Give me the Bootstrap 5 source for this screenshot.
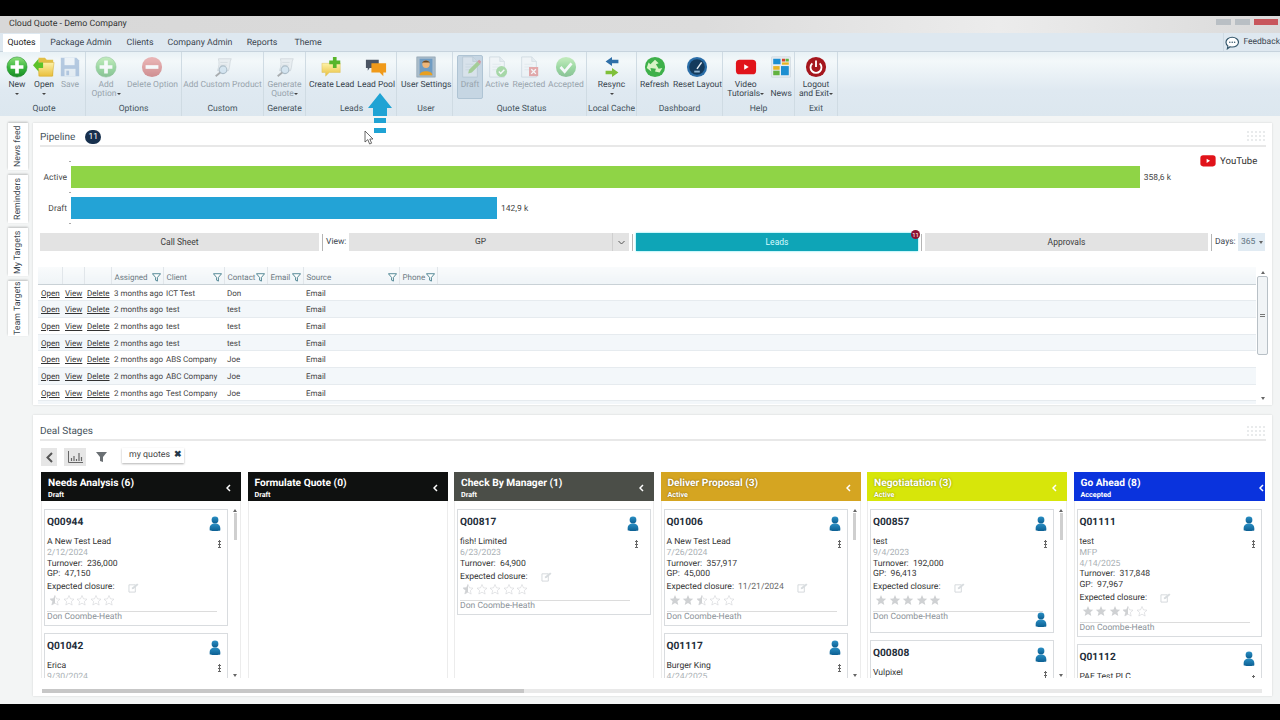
<!DOCTYPE html>
<html lang="en">
<head>
<meta charset="UTF-8" />
<meta name="viewport" content="width=device-width, initial-scale=1.0" />
<title>Cloud Quote - Demo Company</title>
<link href="https://cdn.jsdelivr.net/npm/bootstrap@5.3.3/dist/css/bootstrap.min.css" rel="stylesheet" />
<style>
  html, body { height: 720px; overflow: hidden; }
  body { width: 1280px; background: #000; font-family: Roboto, "Noto Sans", sans-serif; font-size: 8.5px; color: #3b4650; position: relative; line-height: 1.3; text-rendering: geometricPrecision; }
  .svg-defs { position: absolute; width: 0; height: 0; }
  .app { margin-top: 16px; height: 688px; background: #f3f5f5; overflow: hidden; }

  /* window chrome */
  .titlebar { height: 17px; background: linear-gradient(90deg, #d8d8d8 0, #dcdcdc 55%, #ececec 78%, #dadada 100%); padding: 1px 2px 0 9px; font-size: 8.8px; color: #333; }
  .win-btns { align-self: flex-start; margin-top: 2px; }
  .win-btn { height: 6px; width: 15px; background: #b9bfc4; }
  .win-btn.close { width: 24px; background: #c8565c; }
  .tabbar { height: 19px; background: #dee8f0; border-bottom: 1px solid #c6d3dd; padding-left: 3px; }
  .tabbar .nav-link { height: 18px; padding: 5px 0 0; color: #3b4650; font-size: 8.8px; border: 0; border-radius: 0; text-align: center; }
  .tabbar .nav-link.active { background: #fff; color: #222; margin-top: 1px; padding-top: 4px; }
  .t-quotes { width: 37px; } .t-pack { width: 82px; } .t-clients { width: 36px; } .t-company { width: 84px; } .t-reports { width: 40px; } .t-theme { width: 52px; }
  .feedback { width: 57px; height: 18px; font-size: 8.5px; border-left: 1px solid #cfdbe4; padding: 2px 0 0 1px; }
  .ribbon { height: 64px; background: linear-gradient(180deg, #e8f1f5 0, #f3f8fa 14%, #dfe9f1 60%, #dce7ef 100%); }
  .rgroup { border-right: 1px solid #cfdbe3; height: 64px; }
  .rgroup .items { height: 51px; padding-top: 3px; }
  .rgroup .glabel { height: 13px; padding-top: 1px; text-align: center; font-size: 8.6px; color: #44525c; }
  .ritem { text-align: center; height: 44px; font-size: 8.5px; line-height: 8.6px; color: #36434d; white-space: nowrap; border: 1px solid transparent; }
  .ritem svg { display: block; width: 22px; height: 22px; margin: 0 auto 3px; }
  .ritem.off { color: #98a4ad; }
  .ritem.off svg { opacity: .45; }
  .ritem.pressed { background: #c6d6e3; border-color: #afc4d4; border-radius: 2px; }
  .caret-s { display: inline-block; border: 2px solid transparent; border-top-color: #444; border-bottom: 0; vertical-align: 1px; }
  .g-quote { width: 86px; padding-left: 3px; } .g-options { width: 96px; } .g-custom { width: 82px; } .g-generate { width: 42px; }
  .g-leads { width: 91px; padding-left: 1px; } .g-user { width: 56px; padding-left: 3px; } .g-status { width: 134px; padding-left: 4px; }
  .g-cache { width: 50px; } .g-dash { width: 86px; } .g-help { width: 72px; } .g-exit { width: 43px; }
  .w26 { width: 26px; } .w28 { width: 28px; } .w36 { width: 36px; } .w38 { width: 38px; } .w40 { width: 40px; } .w46 { width: 46px; } .w50 { width: 50px; } .w52 { width: 52px; } .wfull { width: 100%; }

  /* side tabs */
  .main { height: 588px; padding-top: 7px; }
  .sidetabs { width: 33px; padding-left: 8px; }
  .sidetab { width: 20px; background: #fff; box-shadow: 0 1px 2px rgba(0,0,0,.22); writing-mode: vertical-rl; transform: rotate(180deg); text-align: center; font-size: 8.8px; line-height: 20px; margin-bottom: 5px; }
  .st1 { height: 47px; } .st2 { height: 48px; } .st3 { height: 48px; } .st4 { height: 55px; }

  /* panels */
  .panel { width: 1239px; background: #fff; box-shadow: 0 0 2px rgba(0,0,0,.14); padding-left: 7px; position: relative; }
  .panel-1 { height: 282px; }
  .panel-2 { height: 281px; margin-top: 10px; }
  .phead { width: 1226px; border-bottom: 2px solid #e8e8e8; font-size: 10px; color: #46535c; }
  .panel-1 .phead { height: 24px; padding-top: 7px; }
  .panel-2 .phead { height: 26px; padding-top: 10px; }
  .count { width: 16px; height: 14px; border-radius: 7px; background: #17304e; color: #fff; font-size: 8.5px; margin-left: 10px; line-height: 14px; text-align: center; }
  .grip { width: 20px; height: 11px; background-image: radial-gradient(circle, #e9ebec 1.3px, transparent 1.5px); background-size: 4px 4px; }

  /* pipeline chart */
  .chart { height: 86px; padding-top: 14px; }
  .chart-left { width: 1131px; }
  .tick { width: 2px; height: 1px; margin: 4px 0 4px 29px; background: #aaa; }
  .tick.first { margin-top: 0; }
  .bar-row { height: 22px; }
  .bar-label { width: 27px; text-align: right; font-size: 8.5px; color: #4a4a4a; margin-right: 4px; padding-top: 3px; }
  .bar-track { width: 1100px; }
  .bar { height: 22px; }
  .bar-green { background: #8fd446; }
  .bar-blue { background: #23a3d6; }
  .bar-val { font-size: 8.5px; margin-left: 4px; white-space: nowrap; color: #444; padding-top: 3px; }
  .yt { margin-left: 27px; margin-top: -6px; font-size: 9.6px; color: #333; height: 14px; gap: 2px; }

  /* switch row */
  .switches { height: 18px; gap: 3px; width: 1225px; font-size: 8.5px; }
  .switches .btn { height: 18px; padding: 0; border: 0; border-radius: 0; background: #e3e3e3; color: #3c3c3c; font-size: 8.5px; line-height: 19px; }
  .sw-call { width: 279px; } .sw-gp { width: 280px; } .sw-leads { width: 282px; } .sw-appr { width: 283px; }
  .switches .btn.sw-leads { background: #0ea5b7; color: #d9fbff; box-shadow: 0 0 2px #5fe7f2; }
  .vsep { width: 1px; height: 17px; background: #b5b5b5; }
  .sw-label { width: 20px; white-space: nowrap; padding-top: 2px; }
  .gp-chev { width: 17px; height: 18px; border-left: 1px solid #cfcfcf; }
  .lead-badge { top: -3px; right: -2px; width: 9px; height: 9px; border-radius: 5px; background: #8d1230; color: #fff; font-size: 6px; line-height: 9px; }
  .days { width: 27px; height: 18px; background: #e1ebf3; color: #5d7180; padding-left: 3px; line-height: 18px; }

  /* leads grid */
  .grid-wrap { margin: 16px 0 0 -2px; width: 1231px; }
  .grid-table { width: 1218px; table-layout: fixed; margin: 0; font-size: 8px; color: #444; }
  .grid-table th, .grid-table td { padding: 2px 0 0 3px; height: 16.7px; line-height: 13px; white-space: nowrap; border-bottom: 1px solid #e6ebef; font-weight: 400; box-shadow: none; background: transparent; color: #444; }
  .grid-table thead th { height: 17px; padding: 1px 0 0 3px; background: linear-gradient(180deg, #f9fbfc, #eff4f7); border-bottom: 1px solid #c9d1d6; border-right: 1px solid #e1e6ea; color: #6d7a83; }
  .grid-table thead th:last-child { border-right: 0; }
  .grid-table tbody tr:nth-child(even) td { background: #f3f7fa; }
  .grid-table a { color: #333; }
  .c-open { width: 24px; } .c-view { width: 22px; } .c-del { width: 27px; } .c-ass { width: 52px; } .c-cli { width: 61px; } .c-con { width: 43px; } .c-eml { width: 36px; } .c-src { width: 96px; } .c-pho { width: 38px; }
  .th-in { padding-right: 2px; }
  .funnel { width: 9px; height: 9px; flex: none; }
  .grid-tail { height: 3px; width: 1218px; background: #f3f7fa; }
  .vscroll { width: 11px; margin-left: 1px; height: 137px; }
  .vthumb { height: 79px; margin-top: 2px; border: 1px solid #b8c0c6; border-radius: 2px; background: #f1f4f6; }
  .vgrip { width: 5px; height: 3px; border-top: 1px solid #777; border-bottom: 1px solid #777; }
  .tri-u, .tri-d { width: 0; height: 0; border: 2px solid transparent; margin: 0 auto; }
  .tri-u { border-bottom: 3px solid #666; border-top: 0; }
  .tri-d { border-top: 3px solid #666; border-bottom: 0; }

  /* deal stages */
  .toolbar { height: 18px; margin: 7px 0 6px 1px; }
  .tool-back { width: 16px; height: 18px; background: #e6e6e6; margin-right: 7px; }
  .tool-chart { width: 22px; height: 18px; background: #e6e6e6; margin-right: 10px; }
  .tool-filter { width: 11px; margin-right: 15px; }
  .chip { width: 62px; height: 15px; align-self: flex-start; box-shadow: 0 1px 2px rgba(0,0,0,.3); padding: 1px 0 0 7px; font-size: 8.8px; color: #444; }
  .chip b { color: #24384a; margin-left: 4px; font-size: 9px; }
  .kanban { width: 1224px; height: 208px; margin-left: 1px; overflow: hidden; gap: 6.5px; }
  .kcol { width: 200px; flex: none; height: 208px; }
  .khead { height: 29px; color: #fff; padding: 2px 10px 0 7px; }
  .khead .ttl { font-size: 10.2px; font-weight: 700; line-height: 14px; }
  .khead .sub { font-size: 7.2px; font-weight: 700; line-height: 8px; }
  .k-black { background: #0f1110; }
  .k-gray { background: #4b4e48; }
  .k-gold { background: #d5a521; text-shadow: 0 0 2px rgba(0,0,0,.45); }
  .k-lime { background: #d7e60a; text-shadow: 0 0 2px rgba(0,0,0,.45); }
  .k-blue { background: #0a33dd; }
  .kbody { height: 177px; overflow: hidden; padding: 8px 2px 0 2px; border-left: 1px solid #ececec; border-right: 1px solid #ececec; }
  .kcards { flex: 1; min-width: 0; }
  .kcards.has-bar { max-width: 185px; }
  .kbar { width: 6px; margin-left: 4px; height: 168px; }
  .kthumb { height: 27px; width: 3px; background: #cfcfcf; margin: 1px auto 0; }
  .kcard { border: 1px solid #d9dcdf; padding: 6px 3px 3px 2px; margin-bottom: 7px; font-size: 8.6px; line-height: 10.67px; color: #333; position: relative; }
  .qrow { height: 21px; padding-right: 3px; }
  .kcard-wide { padding-right: 8px; }
  .kcard-wide .dots { margin-right: 4px; }
  .qno { font-size: 10.2px; font-weight: 700; color: #1f2e3a; padding-top: 2px; }
  .person { width: 12px; height: 15px; }
  .dots { width: 3px; flex: none; margin: 3px 3px 0 0; height: 8px; background-image: radial-gradient(circle, #666 1.2px, transparent 1.4px); background-size: 3px 3px; }
  .muted-l { color: #a9afb4; }
  .exp { margin-top: 2px; height: 11px; }
  .exp-date { color: #666; margin-left: 4px; }
  .edit-i { width: 11px; height: 10px; margin-left: 13px; }
  .stars { height: 14px; margin-top: 1px; padding-left: 2px; gap: 1.5px; }
  .stars svg { width: 12px; height: 12px; }
  .owner { border-top: 1px solid #dcdcdc; color: #8c9399; margin-top: 3px; width: 170px; height: 11px; }
  .owner-row { position: relative; padding-bottom: 7px; }
  .owner-person { right: 3px; top: 1px; }
  .hscroll { height: 4px; width: 1220px; margin: 9px 0 0 2px; background: #e9e9e9; }
  .hthumb { width: 482px; height: 4px; background: #c7c7c7; }

  /* overlays on the recording */
  .lead-arrow { position: absolute; left: 368px; top: 93px; width: 24px; height: 41px; }
  .mouse { position: absolute; left: 364px; top: 130px; width: 10px; height: 15px; }
</style>
</head>
<body>
<svg class="svg-defs">
  <defs>
    <linearGradient id="gGreen" x1="0" y1="0" x2="0" y2="1"><stop offset="0" stop-color="#8fe07a"/><stop offset=".55" stop-color="#35b43a"/><stop offset="1" stop-color="#1a8a26"/></linearGradient>
    <linearGradient id="gRed" x1="0" y1="0" x2="0" y2="1"><stop offset="0" stop-color="#e36a6a"/><stop offset="1" stop-color="#b01818"/></linearGradient>
    <linearGradient id="gYel" x1="0" y1="0" x2="0" y2="1"><stop offset="0" stop-color="#fdf2a8"/><stop offset="1" stop-color="#e9bf3c"/></linearGradient>
    <linearGradient id="gPerson" x1="0" y1="0" x2="0" y2="1"><stop offset="0" stop-color="#2a8fc4"/><stop offset="1" stop-color="#0c5f92"/></linearGradient>
  </defs>
  <symbol id="i-plus" viewBox="0 0 24 24"><circle cx="12" cy="12" r="11" fill="url(#gGreen)" stroke="#1f8a2b" stroke-width=".6"/><path d="M10 5h4v5h5v4h-5v5h-4v-5H5v-4h5z" fill="#fff"/></symbol>
  <symbol id="i-minus" viewBox="0 0 24 24"><circle cx="12" cy="12" r="11" fill="url(#gRed)"/><rect x="5" y="10" width="14" height="4" fill="#fff"/></symbol>
  <symbol id="i-open" viewBox="0 0 24 24"><path d="M6 2h7l2 2h7v18H6z" fill="#e2bf45"/><path d="M5 7h18l-2 15H7z" fill="url(#gYel)" stroke="#d3ac36" stroke-width=".5"/><path d="M0 10l6-7v4h5v6H6v4z" fill="#5cc229"/></symbol>
  <symbol id="i-save" viewBox="0 0 24 24"><path d="M2 2h17l3 3v17H2z" fill="#6c93c4"/><rect x="6" y="2" width="11" height="8" fill="#e8eff6"/><rect x="6" y="14" width="12" height="8" fill="#dbe5ef"/><rect x="8" y="16" width="3" height="5" fill="#6c93c4"/></symbol>
  <symbol id="i-scroll" viewBox="0 0 24 24"><path d="M7 3h14c-2 3-1 8-3 13H6c2-5 2-9 1-13z" fill="#dfe4e8" stroke="#9aa5ad" stroke-width=".7"/><path d="M9 7h8M9 10h7" stroke="#a8b2ba" stroke-width=".8"/><circle cx="12" cy="15" r="4.2" fill="#b8d4e8" stroke="#5f7d92" stroke-width="1.2"/><path d="M9 18l-5 4" stroke="#5a5a5a" stroke-width="2"/></symbol>
  <symbol id="i-newlead" viewBox="0 0 24 24"><path d="M1 8h20v10H9l-4 4v-4H1z" fill="url(#gYel)" stroke="#dcc05a" stroke-width=".5"/><path d="M13 1h4v4h4v4h-4v4h-4V9H9V5h4z" fill="#58b52a"/></symbol>
  <symbol id="i-pool" viewBox="0 0 24 24"><path d="M1 4h14v9H5l-2 3v-3H1z" fill="#4b5563"/><path d="M7 8h16v10h-3v4l-4-4H7z" fill="#f09a1a"/></symbol>
  <symbol id="i-user" viewBox="0 0 24 24"><rect x="2" y="1" width="20" height="22" fill="#a9bccb" stroke="#7f93a3" stroke-width=".6"/><rect x="5" y="3" width="14" height="18" fill="#6f9cc3"/><circle cx="12" cy="9" r="4" fill="#eeb67a"/><path d="M8 8c0-4 8-4 8 0l-1-1H9z" fill="#6b4a25"/><path d="M5 21c0-6 14-6 14 0z" fill="#e8a020"/></symbol>
  <symbol id="i-doc" viewBox="0 0 24 24"><path d="M4 1h11l5 5v17H4z" fill="#eef2f5" stroke="#9eb0bd" stroke-width=".8"/><path d="M15 1v5h5" fill="#d5dfe6" stroke="#9eb0bd" stroke-width=".6"/><path d="M7 9h9M7 12h9M7 15h6" stroke="#c8d3db" stroke-width=".8"/></symbol>
  <symbol id="i-draft" viewBox="0 0 24 24"><use href="#i-doc"/><path d="M10 19l1-4 9-9 3 3-9 9z" fill="#7cc33f"/><path d="M20 6l2-2 2 2-1 3z" fill="#d55"/></symbol>
  <symbol id="i-active" viewBox="0 0 24 24"><use href="#i-doc"/><circle cx="17" cy="17" r="6" fill="#55b84a"/><path d="M14 17l2 2 4-4" stroke="#fff" stroke-width="1.6" fill="none"/></symbol>
  <symbol id="i-rej" viewBox="0 0 24 24"><use href="#i-doc"/><rect x="12" y="12" width="10" height="10" fill="#d65050"/><path d="M14.5 14.5l5 5m0-5l-5 5" stroke="#fff" stroke-width="1.5"/></symbol>
  <symbol id="i-acc" viewBox="0 0 24 24"><circle cx="12" cy="12" r="11" fill="url(#gGreen)"/><path d="M6 12l4.500 5L18 8" stroke="#fff" stroke-width="3" fill="none"/></symbol>
  <symbol id="i-sync" viewBox="0 0 24 24"><path d="M12 1L5 6l7 5V8h7V4h-7z" fill="#2f6fa8"/><path d="M12 13l7 5-7 5v-3H5v-4h7z" fill="#7fc03a"/></symbol>
  <symbol id="i-refresh" viewBox="0 0 24 24"><circle cx="12" cy="12" r="11" fill="#3eb04a"/><path d="M12 4l4 4-3 1 3 5 4-1-3 5-5-1 1-3-6-1 1 4-5-4 2-6 2 2z" fill="#d8f3c6"/></symbol>
  <symbol id="i-gauge" viewBox="0 0 24 24"><circle cx="12" cy="12" r="11" fill="#2b6ea8"/><circle cx="12" cy="12" r="8.500" fill="#143a5c"/><path d="M12 14l5-7" stroke="#e8eef3" stroke-width="1.600"/><rect x="9" y="16" width="6" height="2" fill="#8fb5d2"/></symbol>
  <symbol id="i-yt" viewBox="0 0 24 24"><rect x="1" y="4" width="22" height="16" rx="4" fill="#e1131a"/><path d="M10 9l5 3-5 3z" fill="#fff"/></symbol>
  <symbol id="i-news" viewBox="0 0 24 24"><rect x="2" y="1" width="20" height="22" fill="#e9eef2" stroke="#b5c2cc" stroke-width=".5"/><rect x="3.500" y="3" width="8" height="6" fill="#1d8fd1"/><rect x="13" y="3" width="3.500" height="3" fill="#d5432c"/><rect x="17" y="3" width="3.500" height="3" fill="#62b23f"/><rect x="13" y="7" width="7.500" height="2.500" fill="#e8b523"/><rect x="3.500" y="11" width="7" height="4" fill="#e8b523"/><rect x="3.500" y="16" width="7" height="5" fill="#62b23f"/><rect x="12" y="11" width="8.500" height="10" fill="#1d8fd1"/></symbol>
  <symbol id="i-power" viewBox="0 0 24 24"><circle cx="12" cy="12" r="11" fill="#a5161d"/><path d="M8 8a6 6 0 1 0 8 0" stroke="#fff" stroke-width="2" fill="none"/><path d="M12 5v7" stroke="#fff" stroke-width="2"/></symbol>
  <symbol id="i-funnel" viewBox="0 0 10 10"><path d="M.5.8h9L6 5v4L4 8V5z" fill="#fff" stroke="#2f6f80" stroke-width=".9"/></symbol>
  <symbol id="i-person" viewBox="0 0 12 15"><circle cx="6" cy="4" r="3.400" fill="url(#gPerson)"/><path d="M.8 14.500c-.8-5 1.500-7 5.200-7s6 2 5.200 7c-2 .7-8.400 .7-10.400 0z" fill="url(#gPerson)"/></symbol>
  <symbol id="s-full" viewBox="0 0 24 24"><path d="M12 2l3 7 7.500.7-5.700 5 1.800 7.300L12 18l-6.600 4 1.800-7.300-5.700-5L9 9z" fill="#cfd1d3"/></symbol>
  <symbol id="s-empty" viewBox="0 0 24 24"><path d="M12 3l3 6.700 7 .7-5.300 4.700 1.600 7L12 18.300 5.700 22l1.600-7L2 10.400l7-.7z" fill="#fff" stroke="#d2d4d6" stroke-width="1.200"/></symbol>
  <symbol id="s-half" viewBox="0 0 24 24"><use href="#s-empty"/><path d="M12 2v16l-6.600 4 1.800-7.300-5.700-5L9 9z" fill="#cfd1d3"/></symbol>
  <symbol id="i-edit" viewBox="0 0 12 11"><path d="M1 2h7v8H1z" fill="none" stroke="#d2d6d9" stroke-width="1"/><path d="M4 7l.5-2L10 .5l1.500 1.500L6 6.500z" fill="#d8dcdf"/></symbol>
</svg>

<div class="app">
  <div class="titlebar d-flex align-items-center justify-content-between">
    <span>Cloud Quote - Demo Company</span>
    <span class="win-btns d-flex gap-1"><span class="win-btn"></span><span class="win-btn"></span><span class="win-btn close"></span></span>
  </div>

  <div class="tabbar d-flex justify-content-between">
    <ul class="nav">
      <li class="nav-item"><a class="nav-link active t-quotes" href="#">Quotes</a></li>
      <li class="nav-item"><a class="nav-link t-pack" href="#">Package Admin</a></li>
      <li class="nav-item"><a class="nav-link t-clients" href="#">Clients</a></li>
      <li class="nav-item"><a class="nav-link t-company" href="#">Company Admin</a></li>
      <li class="nav-item"><a class="nav-link t-reports" href="#">Reports</a></li>
      <li class="nav-item"><a class="nav-link t-theme" href="#">Theme</a></li>
    </ul>
    <div class="feedback d-flex align-items-center gap-1">
      <svg width="15" height="14" viewBox="0 0 15 14"><path d="M7.500 1c3.600 0 6.500 2.300 6.500 5.200s-2.900 5-6.500 5c-.8 0-1.500-.1-2.200-.3L2.500 13l.5-3C1.700 9 1 7.700 1 6.200 1 3.300 3.900 1 7.500 1z" fill="#fff" stroke="#33566b" stroke-width="1.200"/><circle cx="5" cy="6.200" r=".8" fill="#33566b"/><circle cx="7.500" cy="6.200" r=".8" fill="#33566b"/><circle cx="10" cy="6.200" r=".8" fill="#33566b"/></svg>
      <span>Feedback</span>
    </div>
  </div>

  <div class="ribbon d-flex">
    <div class="rgroup g-quote">
      <div class="items d-flex">
        <div class="ritem w28"><svg><use href="#i-plus"/></svg>New<br><span class="caret-s"></span></div>
        <div class="ritem w26"><svg><use href="#i-open"/></svg>Open<br><span class="caret-s"></span></div>
        <div class="ritem w26 off"><svg><use href="#i-save"/></svg>Save</div>
      </div>
      <div class="glabel">Quote</div>
    </div>
    <div class="rgroup g-options">
      <div class="items d-flex">
        <div class="ritem w40 off"><svg><use href="#i-plus"/></svg>Add<br>Option<span class="caret-s"></span></div>
        <div class="ritem w52 off"><svg><use href="#i-minus"/></svg>Delete Option</div>
      </div>
      <div class="glabel">Options</div>
    </div>
    <div class="rgroup g-custom">
      <div class="items d-flex"><div class="ritem wfull off"><svg><use href="#i-scroll"/></svg>Add Custom Product</div></div>
      <div class="glabel">Custom</div>
    </div>
    <div class="rgroup g-generate">
      <div class="items d-flex"><div class="ritem wfull off"><svg><use href="#i-scroll"/></svg>Generate<br>Quote<span class="caret-s"></span></div></div>
      <div class="glabel">Generate</div>
    </div>
    <div class="rgroup g-leads">
      <div class="items d-flex">
        <div class="ritem w50"><svg><use href="#i-newlead"/></svg>Create Lead</div>
        <div class="ritem w40"><svg><use href="#i-pool"/></svg>Lead Pool</div>
      </div>
      <div class="glabel">Leads</div>
    </div>
    <div class="rgroup g-user">
      <div class="items d-flex"><div class="ritem wfull"><svg><use href="#i-user"/></svg>User Settings</div></div>
      <div class="glabel">User</div>
    </div>
    <div class="rgroup g-status">
      <div class="items d-flex">
        <div class="ritem w26 off pressed"><svg><use href="#i-draft"/></svg>Draft</div>
        <div class="ritem w28 off"><svg><use href="#i-active"/></svg>Active</div>
        <div class="ritem w36 off"><svg><use href="#i-rej"/></svg>Rejected</div>
        <div class="ritem w38 off"><svg><use href="#i-acc"/></svg>Accepted</div>
      </div>
      <div class="glabel">Quote Status</div>
    </div>
    <div class="rgroup g-cache">
      <div class="items d-flex"><div class="ritem wfull"><svg><use href="#i-sync"/></svg>Resync<br><span class="caret-s"></span></div></div>
      <div class="glabel">Local Cache</div>
    </div>
    <div class="rgroup g-dash">
      <div class="items d-flex">
        <div class="ritem w36"><svg><use href="#i-refresh"/></svg>Refresh</div>
        <div class="ritem w50"><svg><use href="#i-gauge"/></svg>Reset Layout</div>
      </div>
      <div class="glabel">Dashboard</div>
    </div>
    <div class="rgroup g-help">
      <div class="items d-flex">
        <div class="ritem w46"><svg><use href="#i-yt"/></svg>Video<br>Tutorials<span class="caret-s"></span></div>
        <div class="ritem w26"><svg><use href="#i-news"/></svg><br>News</div>
      </div>
      <div class="glabel">Help</div>
    </div>
    <div class="rgroup g-exit">
      <div class="items d-flex"><div class="ritem wfull"><svg><use href="#i-power"/></svg>Logout<br>and Exit<span class="caret-s"></span></div></div>
      <div class="glabel">Exit</div>
    </div>
  </div>

  <div class="main d-flex">
    <div class="sidetabs">
      <div class="sidetab st1">News feed</div>
      <div class="sidetab st2">Reminders</div>
      <div class="sidetab st3">My Targets</div>
      <div class="sidetab st4">Team Targets</div>
    </div>

    <div>
      <section class="panel panel-1">
        <div class="phead d-flex align-items-start justify-content-between">
          <span class="d-flex align-items-center">Pipeline <span class="count">11</span></span>
          <span class="grip"></span>
        </div>
        <div class="chart d-flex">
          <div class="chart-left">
            <div class="tick first"></div>
            <div class="bar-row d-flex align-items-center">
              <span class="bar-label">Active</span>
              <div class="bar-track d-flex align-items-center"><div class="bar bar-green" style="width:97.27%"></div><span class="bar-val">358,6 k</span></div>
            </div>
            <div class="tick"></div>
            <div class="bar-row d-flex align-items-center">
              <span class="bar-label">Draft</span>
              <div class="bar-track d-flex align-items-center"><div class="bar bar-blue" style="width:38.73%"></div><span class="bar-val">142,9 k</span></div>
            </div>
            <div class="tick"></div>
          </div>
          <div class="yt d-flex align-items-center">
            <svg width="20" height="17" viewBox="0 2 24 20"><use href="#i-yt"/></svg><span>YouTube</span>
          </div>
        </div>
        <div class="switches d-flex align-items-center">
          <button class="btn sw-call">Call Sheet</button>
          <span class="vsep"></span>
          <span class="sw-label">View:</span>
          <div class="btn sw-gp d-flex justify-content-between">
            <span class="flex-grow-1">GP</span>
            <span class="gp-chev d-flex align-items-center justify-content-center"><svg width="7" height="5" viewBox="0 0 7 5"><path d="M.5 1l3 3 3-3" fill="none" stroke="#555" stroke-width="1"/></svg></span>
          </div>
          <span class="vsep"></span>
          <button class="btn sw-leads position-relative">Leads<span class="position-absolute lead-badge">11</span></button>
          <span class="vsep"></span>
          <button class="btn sw-appr">Approvals</button>
          <span class="vsep"></span>
          <span class="sw-label">Days:</span>
          <div class="days d-flex align-items-center gap-1">365 <span class="tri-d m-0"></span></div>
        </div>
        <div class="grid-wrap d-flex">
          <div>
            <table class="table grid-table">
              <colgroup><col class="c-open"><col class="c-view"><col class="c-del"><col class="c-ass"><col class="c-cli"><col class="c-con"><col class="c-eml"><col class="c-src"><col class="c-pho"><col></colgroup>
              <thead>
                <tr>
                  <th></th><th></th><th></th>
                  <th><div class="th-in d-flex justify-content-between align-items-center">Assigned<svg class="funnel"><use href="#i-funnel"/></svg></div></th>
                  <th><div class="th-in d-flex justify-content-between align-items-center">Client<svg class="funnel"><use href="#i-funnel"/></svg></div></th>
                  <th><div class="th-in d-flex justify-content-between align-items-center">Contact<svg class="funnel"><use href="#i-funnel"/></svg></div></th>
                  <th><div class="th-in d-flex justify-content-between align-items-center">Email<svg class="funnel"><use href="#i-funnel"/></svg></div></th>
                  <th><div class="th-in d-flex justify-content-between align-items-center">Source<svg class="funnel"><use href="#i-funnel"/></svg></div></th>
                  <th><div class="th-in d-flex justify-content-between align-items-center">Phone<svg class="funnel"><use href="#i-funnel"/></svg></div></th>
                  <th></th>
                </tr>
              </thead>
              <tbody>
                <tr><td><a href="#">Open</a></td><td><a href="#">View</a></td><td><a href="#">Delete</a></td><td>3 months ago</td><td>ICT Test</td><td>Don</td><td></td><td>Email</td><td></td><td></td></tr>
                <tr><td><a href="#">Open</a></td><td><a href="#">View</a></td><td><a href="#">Delete</a></td><td>2 months ago</td><td>test</td><td>test</td><td></td><td>Email</td><td></td><td></td></tr>
                <tr><td><a href="#">Open</a></td><td><a href="#">View</a></td><td><a href="#">Delete</a></td><td>2 months ago</td><td>test</td><td>test</td><td></td><td>Email</td><td></td><td></td></tr>
                <tr><td><a href="#">Open</a></td><td><a href="#">View</a></td><td><a href="#">Delete</a></td><td>2 months ago</td><td>test</td><td>test</td><td></td><td>Email</td><td></td><td></td></tr>
                <tr><td><a href="#">Open</a></td><td><a href="#">View</a></td><td><a href="#">Delete</a></td><td>2 months ago</td><td>ABS Company</td><td>Joe</td><td></td><td>Email</td><td></td><td></td></tr>
                <tr><td><a href="#">Open</a></td><td><a href="#">View</a></td><td><a href="#">Delete</a></td><td>2 months ago</td><td>ABC Company</td><td>Joe</td><td></td><td>Email</td><td></td><td></td></tr>
                <tr><td><a href="#">Open</a></td><td><a href="#">View</a></td><td><a href="#">Delete</a></td><td>2 months ago</td><td>Test Company</td><td>Joe</td><td></td><td>Email</td><td></td><td></td></tr>
              </tbody>
            </table>
            <div class="grid-tail"></div>
          </div>
          <div class="vscroll d-flex flex-column justify-content-between pt-1 pb-1">
            <div>
              <div class="tri-u"></div>
              <div class="vthumb d-flex align-items-center justify-content-center"><span class="vgrip"></span></div>
            </div>
            <div class="tri-d"></div>
          </div>
        </div>
      </section>

      <section class="panel panel-2">
        <div class="phead d-flex align-items-start justify-content-between">
          <span>Deal Stages</span>
          <span class="grip"></span>
        </div>
        <div class="toolbar d-flex align-items-center">
          <span class="tool-back d-flex align-items-center justify-content-center"><svg width="7" height="11" viewBox="0 0 7 11"><path d="M6 1L1.500 5.500 6 10" fill="none" stroke="#555" stroke-width="2"/></svg></span>
          <span class="tool-chart d-flex align-items-center justify-content-center"><svg width="15" height="12" viewBox="0 0 15 12"><path d="M.5 0v11.500H15" fill="none" stroke="#666"/><path d="M3.500 7v3M6 5v5M8.500 8v2M11 2v8M13.500 6v4" stroke="#666" stroke-width="1.200"/></svg></span>
          <span class="tool-filter d-flex"><svg width="11" height="10" viewBox="0 0 11 10"><path d="M0 0h11L7 5v5L4 9V5z" fill="#6a6f73"/></svg></span>
          <span class="chip d-flex align-items-center">my quotes <b>✖</b></span>
        </div>

        <div class="kanban d-flex">
          <div class="kcol">
            <div class="khead k-black d-flex justify-content-between align-items-center"><div><div class="ttl">Needs Analysis (6)</div><div class="sub">Draft</div></div><svg width="5" height="8" viewBox="0 0 5 8"><path d="M4 1L1 4l3 3" fill="none" stroke="#fff" stroke-width="1.500"/></svg></div>
            <div class="kbody d-flex">
              <div class="kcards has-bar">
                <div class="kcard">
                  <div class="qrow d-flex justify-content-between"><span class="qno">Q00944</span><svg class="person"><use href="#i-person"/></svg></div>
                  <div class="d-flex justify-content-between"><span>A New Test Lead</span><span class="dots"></span></div>
                  <div class="muted-l">2/12/2024</div>
                  <div>Turnover:&nbsp; 236,000</div>
                  <div>GP:&nbsp; 47,150</div>
                  <div class="exp d-flex align-items-center">Expected closure:<svg class="edit-i"><use href="#i-edit"/></svg></div>
                  <div class="stars d-flex"><svg><use href="#s-half"/></svg><svg><use href="#s-empty"/></svg><svg><use href="#s-empty"/></svg><svg><use href="#s-empty"/></svg><svg><use href="#s-empty"/></svg></div>
                  <div class="owner">Don Coombe-Heath</div>
                </div>
                <div class="kcard">
                  <div class="qrow d-flex justify-content-between"><span class="qno">Q01042</span><svg class="person"><use href="#i-person"/></svg></div>
                  <div class="d-flex justify-content-between"><span>Erica</span><span class="dots"></span></div>
                  <div class="muted-l">9/30/2024</div>
                </div>
              </div>
              <div class="kbar d-flex flex-column justify-content-between"><div><div class="tri-u"></div><div class="kthumb"></div></div><div class="tri-d"></div></div>
            </div>
          </div>

          <div class="kcol">
            <div class="khead k-black d-flex justify-content-between align-items-center"><div><div class="ttl">Formulate Quote (0)</div><div class="sub">Draft</div></div><svg width="5" height="8" viewBox="0 0 5 8"><path d="M4 1L1 4l3 3" fill="none" stroke="#fff" stroke-width="1.500"/></svg></div>
            <div class="kbody d-flex"></div>
          </div>

          <div class="kcol">
            <div class="khead k-gray d-flex justify-content-between align-items-center"><div><div class="ttl">Check By Manager (1)</div><div class="sub">Draft</div></div><svg width="5" height="8" viewBox="0 0 5 8"><path d="M4 1L1 4l3 3" fill="none" stroke="#fff" stroke-width="1.500"/></svg></div>
            <div class="kbody d-flex">
              <div class="kcards">
                <div class="kcard kcard-wide">
                  <div class="qrow d-flex justify-content-between"><span class="qno">Q00817</span><svg class="person"><use href="#i-person"/></svg></div>
                  <div class="d-flex justify-content-between"><span>fish! Limited</span><span class="dots"></span></div>
                  <div class="muted-l">6/23/2023</div>
                  <div>Turnover:&nbsp; 64,900</div>
                  <div class="exp d-flex align-items-center">Expected closure:<svg class="edit-i"><use href="#i-edit"/></svg></div>
                  <div class="stars d-flex"><svg><use href="#s-half"/></svg><svg><use href="#s-empty"/></svg><svg><use href="#s-empty"/></svg><svg><use href="#s-empty"/></svg><svg><use href="#s-empty"/></svg></div>
                  <div class="owner">Don Coombe-Heath</div>
                </div>
              </div>
            </div>
          </div>

          <div class="kcol">
            <div class="khead k-gold d-flex justify-content-between align-items-center"><div><div class="ttl">Deliver Proposal (3)</div><div class="sub">Active</div></div><svg width="5" height="8" viewBox="0 0 5 8"><path d="M4 1L1 4l3 3" fill="none" stroke="#fff" stroke-width="1.500"/></svg></div>
            <div class="kbody d-flex">
              <div class="kcards has-bar">
                <div class="kcard">
                  <div class="qrow d-flex justify-content-between"><span class="qno">Q01006</span><svg class="person"><use href="#i-person"/></svg></div>
                  <div class="d-flex justify-content-between"><span>A New Test Lead</span><span class="dots"></span></div>
                  <div class="muted-l">7/26/2024</div>
                  <div>Turnover:&nbsp; 357,917</div>
                  <div>GP:&nbsp; 45,000</div>
                  <div class="exp d-flex align-items-center">Expected closure:<span class="exp-date">11/21/2024</span><svg class="edit-i"><use href="#i-edit"/></svg></div>
                  <div class="stars d-flex"><svg><use href="#s-full"/></svg><svg><use href="#s-full"/></svg><svg><use href="#s-half"/></svg><svg><use href="#s-empty"/></svg><svg><use href="#s-empty"/></svg></div>
                  <div class="owner">Don Coombe-Heath</div>
                </div>
                <div class="kcard">
                  <div class="qrow d-flex justify-content-between"><span class="qno">Q01117</span><svg class="person"><use href="#i-person"/></svg></div>
                  <div class="d-flex justify-content-between"><span>Burger King</span><span class="dots"></span></div>
                  <div class="muted-l">4/24/2025</div>
                </div>
              </div>
              <div class="kbar d-flex flex-column justify-content-between"><div><div class="tri-u"></div><div class="kthumb"></div></div><div class="tri-d"></div></div>
            </div>
          </div>

          <div class="kcol">
            <div class="khead k-lime d-flex justify-content-between align-items-center"><div><div class="ttl">Negotiatation (3)</div><div class="sub">Active</div></div><svg width="5" height="8" viewBox="0 0 5 8"><path d="M4 1L1 4l3 3" fill="none" stroke="#fff" stroke-width="1.500"/></svg></div>
            <div class="kbody d-flex">
              <div class="kcards has-bar">
                <div class="kcard">
                  <div class="qrow d-flex justify-content-between"><span class="qno">Q00857</span><svg class="person"><use href="#i-person"/></svg></div>
                  <div class="d-flex justify-content-between"><span>test</span><span class="dots"></span></div>
                  <div class="muted-l">9/4/2023</div>
                  <div>Turnover:&nbsp; 192,000</div>
                  <div>GP:&nbsp; 96,413</div>
                  <div class="exp d-flex align-items-center">Expected closure:<svg class="edit-i"><use href="#i-edit"/></svg></div>
                  <div class="stars d-flex"><svg><use href="#s-full"/></svg><svg><use href="#s-full"/></svg><svg><use href="#s-full"/></svg><svg><use href="#s-full"/></svg><svg><use href="#s-full"/></svg></div>
                  <div class="owner-row"><div class="owner">Don Coombe-Heath</div><svg class="person position-absolute owner-person"><use href="#i-person"/></svg></div>
                </div>
                <div class="kcard">
                  <div class="qrow d-flex justify-content-between"><span class="qno">Q00808</span><svg class="person"><use href="#i-person"/></svg></div>
                  <div class="d-flex justify-content-between"><span>Vulpixel</span><span class="dots"></span></div>
                </div>
              </div>
              <div class="kbar d-flex flex-column justify-content-between"><div><div class="tri-u"></div><div class="kthumb"></div></div><div class="tri-d"></div></div>
            </div>
          </div>

          <div class="kcol">
            <div class="khead k-blue d-flex justify-content-between align-items-center"><div><div class="ttl">Go Ahead (8)</div><div class="sub">Accepted</div></div><svg width="5" height="8" viewBox="0 0 5 8"><path d="M4 1L1 4l3 3" fill="none" stroke="#fff" stroke-width="1.500"/></svg></div>
            <div class="kbody d-flex">
              <div class="kcards has-bar">
                <div class="kcard">
                  <div class="qrow d-flex justify-content-between"><span class="qno">Q01111</span><svg class="person"><use href="#i-person"/></svg></div>
                  <div class="d-flex justify-content-between"><span>test</span><span class="dots"></span></div>
                  <div class="muted-l">MFP</div>
                  <div class="muted-l">4/14/2025</div>
                  <div>Turnover:&nbsp; 317,848</div>
                  <div>GP:&nbsp; 97,967</div>
                  <div class="exp d-flex align-items-center">Expected closure:<svg class="edit-i"><use href="#i-edit"/></svg></div>
                  <div class="stars d-flex"><svg><use href="#s-full"/></svg><svg><use href="#s-full"/></svg><svg><use href="#s-full"/></svg><svg><use href="#s-half"/></svg><svg><use href="#s-empty"/></svg></div>
                  <div class="owner">Don Coombe-Heath</div>
                </div>
                <div class="kcard">
                  <div class="qrow d-flex justify-content-between"><span class="qno">Q01112</span><svg class="person"><use href="#i-person"/></svg></div>
                  <div class="d-flex justify-content-between"><span>PAE Test PLC</span><span class="dots"></span></div>
                </div>
              </div>
            </div>
          </div>
        </div>

        <div class="hscroll"><div class="hthumb"></div></div>
      </section>
    </div>
  </div>
</div>

<!-- annotation burned into the recording -->
<svg class="lead-arrow" viewBox="0 0 24 41"><path d="M12 0l12 15h-5v8H5v-8H0z" fill="#1fa3d4"/><rect x="6" y="25" width="12" height="5" fill="#1fa3d4"/><rect x="6" y="35" width="12" height="5" fill="#1fa3d4"/></svg>
<svg class="mouse" viewBox="0 0 10 15"><path d="M1 1v11l2.800-2.400L5.600 14l2-.8L5.800 9H9z" fill="#fff" stroke="#444" stroke-width=".8"/></svg>

<script src="https://cdn.jsdelivr.net/npm/bootstrap@5.3.3/dist/js/bootstrap.bundle.min.js"></script>
</body>
</html>
